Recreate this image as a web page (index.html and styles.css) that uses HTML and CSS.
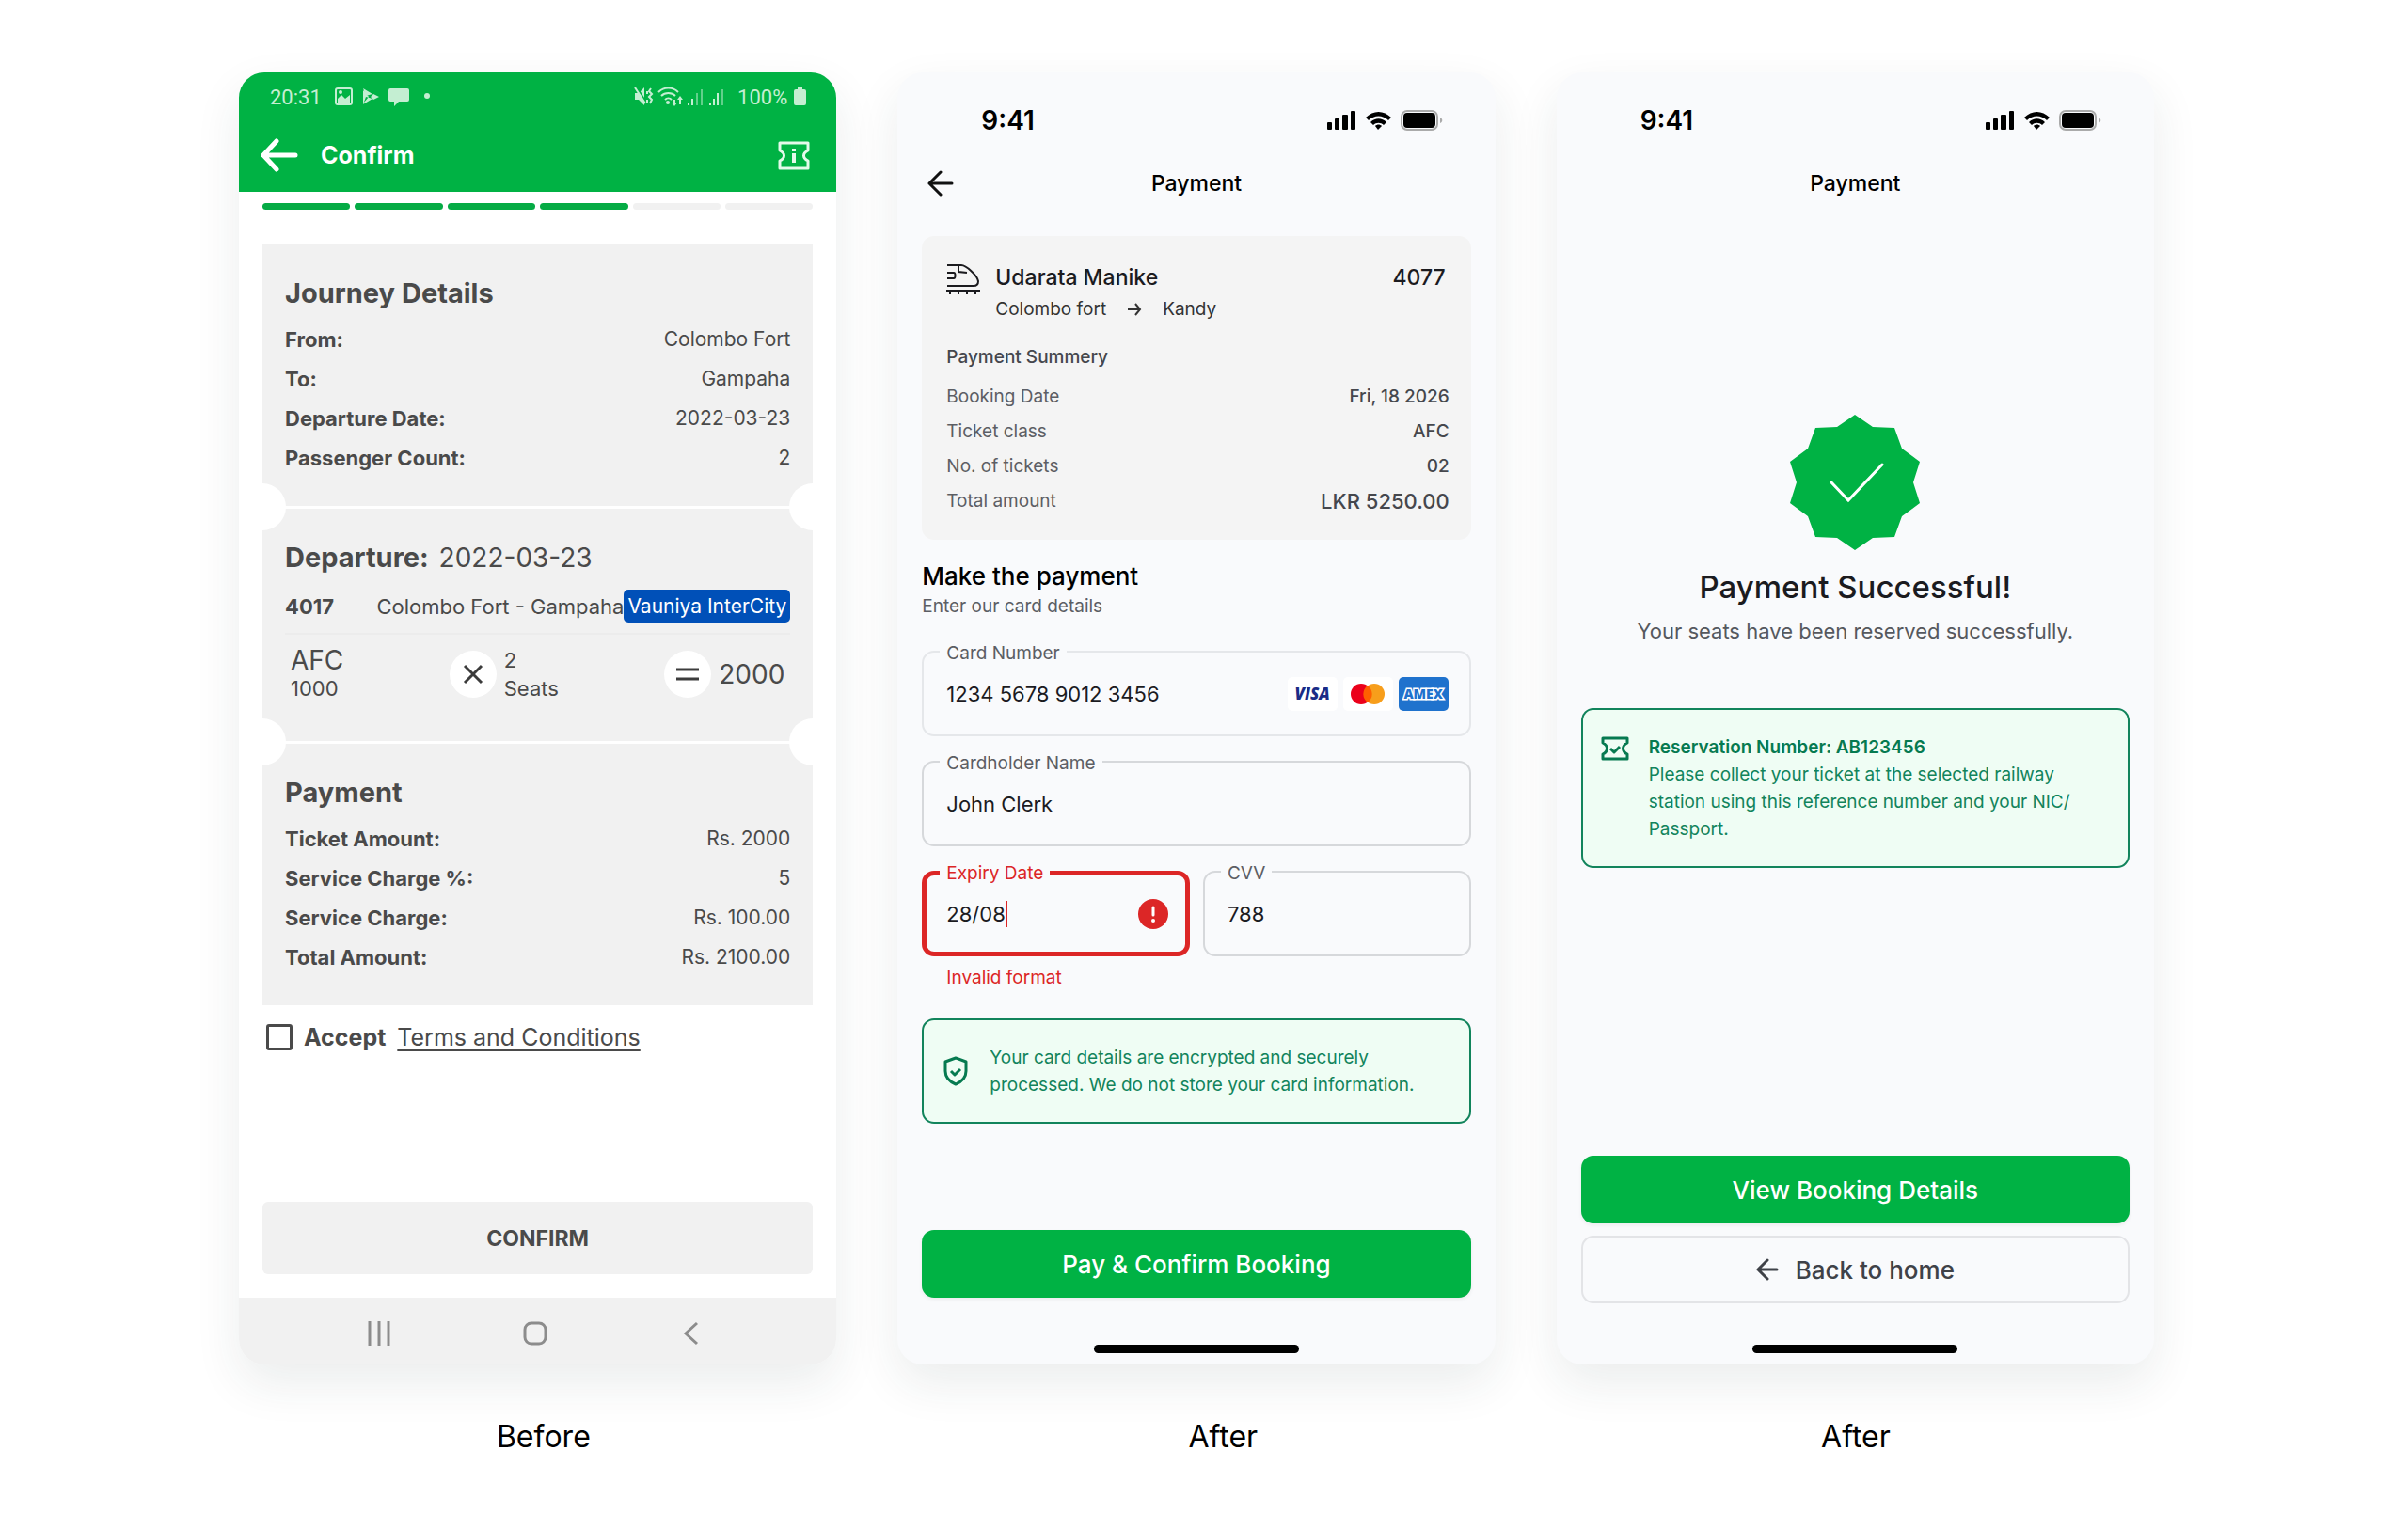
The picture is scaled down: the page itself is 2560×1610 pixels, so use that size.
FILE: index.html
```html
<!DOCTYPE html>
<html lang="en">
<head>
  <meta charset="UTF-8">
  <meta name="viewport" content="width=device-width, initial-scale=1.0">
  <title>Train Booking - Before / After</title>
  <link rel="stylesheet" href="styles.css">
</head>
<body>
  <main class="phones">

    <!-- Before -->
    <section class="phone phone-old">
      <header class="old-header">
        <div class="old-status">
          <span>20:31</span>
          <svg class="old-icons-left" width="102" height="24" viewBox="0 0 102 24">
            <rect class="line" x="1" y="3" width="17" height="17" rx="2"/>
            <path d="M3 18v-4l4-4 4 4 5-4v8z"/><circle cx="6" cy="7" r="2"/>
            <path d="M30 3l10 6-7 2zM30 20l10-6-7-2zM41 9l6 3-6 3-3-3zM30 5l6 7-6 7z"/>
            <path d="M59 3h18a2 2 0 0 1 2 2v10a2 2 0 0 1-2 2h-9l-5 5v-5h-4a2 2 0 0 1-2-2V5a2 2 0 0 1 2-2z"/>
            <circle cx="98" cy="11" r="3"/>
          </svg>
          <svg class="old-icons-right" width="98" height="24" viewBox="0 0 98 24">
            <path d="M1 8h4l6-6v19l-6-6H1z"/>
            <path class="cut" d="M3 2l10 16"/>
            <path class="line" d="M1 2l11 17M14 6v3M14 15v4M18 3l-2 3 3 3-3 3 3 3-2 4"/>
            <path class="line" d="M26 7c6-6 15-6 21 0M29 11c4-4 11-4 15 0M33 15c2-2 5-2 7 0M43 20v-5M49 13v7"/>
            <circle cx="36" cy="18" r="2"/>
            <path d="M40 18l3 4 3-4zM46 15l3-4 3 4z"/>
            <path d="M57 18h2v3h-2zM61 14h2v7h-2zM80 18h2v3h-2zM84 14h2v7h-2zM88 8h2v13h-2z"/>
            <path class="dim" d="M66 8h2v13h-2zM71 4h2v17h-2zM93 4h2v17h-2z"/>
          </svg>
          <span>100%</span>
          <svg width="13" height="20" viewBox="0 0 13 20"><path d="M4 0h5v2h2a2 2 0 0 1 2 2v13a2 2 0 0 1-2 2H2a2 2 0 0 1-2-2V4a2 2 0 0 1 2-2h2z"/></svg>
        </div>
        <div class="old-bar">
          <button class="icon-btn" aria-label="Back">
            <svg width="40" height="36" viewBox="0 0 40 36"><path d="M37 18H3M17 3L3 18l14 15" fill="none" stroke="#fff" stroke-width="5" stroke-linecap="round" stroke-linejoin="round"/></svg>
          </button>
          <h1>Confirm</h1>
          <button class="icon-btn" aria-label="Ticket info">
            <svg width="34" height="31" viewBox="0 0 34 31"><path d="M2 2h30v8c-6 3-6 8 0 11v8H2v-8c6-3 6-8 0-11z" fill="none" stroke="#e3faea" stroke-width="3" stroke-linejoin="round"/><path d="M15 8h4v3h-4zM15 13h4v10h-4z" fill="#e3faea"/></svg>
          </button>
        </div>
      </header>

      <div class="steps">
        <span class="done"></span><span class="done"></span><span class="done"></span><span class="done"></span><span></span><span></span>
      </div>

      <div class="ticket">
        <div class="ticket-part">
          <h2>Journey Details</h2>
          <dl>
            <div><dt>From:</dt><dd>Colombo Fort</dd></div>
            <div><dt>To:</dt><dd>Gampaha</dd></div>
            <div><dt>Departure Date:</dt><dd>2022-03-23</dd></div>
            <div><dt>Passenger Count:</dt><dd>2</dd></div>
          </dl>
        </div>
        <div class="ticket-part">
          <h2>Departure: <span>2022-03-23</span></h2>
          <div class="train">
            <strong>4017</strong>
            <span class="train-route">Colombo Fort - Gampaha</span>
            <span class="train-name">Vauniya InterCity</span>
          </div>
          <div class="sum">
            <div class="sum-class"><span class="big">AFC</span><span>1000</span></div>
            <div class="sum-seats">
              <svg class="round" width="50" height="50" viewBox="0 0 50 50"><path d="M16 16l18 18M34 16L16 34"/></svg>
              <div><span>2</span><span>Seats</span></div>
            </div>
            <div class="sum-total">
              <svg class="round" width="50" height="50" viewBox="0 0 50 50"><path d="M13 20h24M13 30h24"/></svg>
              <span class="big">2000</span>
            </div>
          </div>
        </div>
        <div class="ticket-part">
          <h2>Payment</h2>
          <dl>
            <div><dt>Ticket Amount:</dt><dd>Rs. 2000</dd></div>
            <div><dt>Service Charge %:</dt><dd>5</dd></div>
            <div><dt>Service Charge:</dt><dd>Rs. 100.00</dd></div>
            <div><dt>Total Amount:</dt><dd>Rs. 2100.00</dd></div>
          </dl>
        </div>
      </div>

      <div class="accept">
        <input type="checkbox" id="accept">
        <label for="accept">Accept</label>
        <a href="#">Terms and Conditions</a>
      </div>

      <button class="old-confirm">CONFIRM</button>

      <nav class="android-nav">
        <button class="icon-btn" aria-label="Recent apps"><svg width="26" height="26" viewBox="0 0 26 26"><path d="M3 0v26M13 0v26M23 0v26"/></svg></button>
        <button class="icon-btn" aria-label="Home"><svg width="26" height="26" viewBox="0 0 26 26"><rect x="2" y="2" width="22" height="22" rx="7"/></svg></button>
        <button class="icon-btn" aria-label="Back"><svg width="26" height="26" viewBox="0 0 26 26"><path d="M19 2L7 13l12 11"/></svg></button>
      </nav>
    </section>

    <!-- After: card details -->
    <section class="phone phone-new">
      <div class="ios-status">
        <span>9:41</span>
        <svg width="124" height="24" viewBox="0 0 124 24">
          <rect x="1" y="14" width="5" height="8" rx="1"/><rect x="9" y="10" width="5" height="12" rx="1"/><rect x="17" y="6" width="6" height="16" rx="1"/><rect x="26" y="2" width="5" height="20" rx="1"/>
          <path d="M42 9c8-8 19-8 27 0l-3 3c-6-6-15-6-21 0zM47 14c5-5 12-5 17 0l-3 3c-3-3-8-3-11 0zM52 18c2-2 5-2 7 0l-4 4z"/>
          <rect x="80" y="2" width="38" height="20" rx="6" fill="none" stroke="#aaa" stroke-width="2"/>
          <rect x="82" y="4" width="34" height="16" rx="4"/>
          <path d="M121 9c3 1 3 5 0 6z" fill="#aaa"/>
        </svg>
      </div>
      <header class="title-bar">
        <button class="icon-btn" aria-label="Back">
          <svg width="28" height="28" viewBox="0 0 28 28"><path d="M26 14H2M14 2L2 14l12 12" fill="none" stroke="#111" stroke-width="3" stroke-linecap="round" stroke-linejoin="round"/></svg>
        </button>
        <h1>Payment</h1>
      </header>

      <div class="summary">
        <svg class="train-icon" width="36" height="34" viewBox="0 0 36 34" fill="none" stroke="#1b1b1f" stroke-width="2">
          <path d="M1 2h15c5 0 17 11 18 17 0 3-2 5-5 5H1M13 2v7l9 1M16 2M1 10h7c2 0 2 6 0 6H1M0 29h36M4 29v4M13 29v4M22 29v4M31 29v4"/>
        </svg>
        <div class="summary-head">
          <div class="summary-name"><h2>Udarata Manike</h2><span>4077</span></div>
          <p class="route">
            <span>Colombo fort</span>
            <svg width="16" height="16" viewBox="0 0 16 16"><path d="M1 8h13M9 2l5 6-5 6" fill="none" stroke="#333" stroke-width="2"/></svg>
            <span>Kandy</span>
          </p>
        </div>
        <h3>Payment Summery</h3>
        <dl>
          <div><dt>Booking Date</dt><dd>Fri, 18 2026</dd></div>
          <div><dt>Ticket class</dt><dd>AFC</dd></div>
          <div><dt>No. of tickets</dt><dd>02</dd></div>
          <div><dt>Total amount</dt><dd class="total">LKR 5250.00</dd></div>
        </dl>
      </div>

      <h2 class="form-title">Make the payment</h2>
      <p class="form-sub">Enter our card details</p>

      <form class="card-form">
        <div class="field field-light">
          <label for="number">Card Number</label>
          <input type="text" id="number" value="1234 5678 9012 3456">
          <div class="brands">
            <span class="visa">VISA</span>
            <span class="mastercard">
              <svg width="38" height="24" viewBox="0 0 38 24"><circle cx="12" cy="12" r="11" fill="#eb001b"/><circle cx="26" cy="12" r="11" fill="#f79e1b"/><path d="M19 3a11 11 0 0 1 0 18 11 11 0 0 1 0-18z" fill="#ff5f00"/></svg>
            </span>
            <span class="amex">AMEX</span>
          </div>
        </div>
        <div class="field">
          <label for="holder">Cardholder Name</label>
          <input type="text" id="holder" value="John Clerk">
        </div>
        <div class="field-row">
          <div class="field field-error">
            <label for="expiry">Expiry Date</label>
            <input type="text" id="expiry" value="28/08" aria-describedby="expiry-error">
            <span class="caret"></span>
            <svg class="alert" width="34" height="34" viewBox="0 0 34 34"><circle cx="17" cy="17" r="16" fill="#dc2626"/><path d="M17 10v8" stroke="#fff" stroke-width="3" stroke-linecap="round"/><circle cx="17" cy="24" r="2" fill="#fff"/></svg>
          </div>
          <div class="field">
            <label for="cvv">CVV</label>
            <input type="text" id="cvv" value="788">
          </div>
        </div>
      </form>
      <p class="error-text" id="expiry-error">Invalid format</p>

      <div class="note note-secure">
        <svg width="32" height="32" viewBox="0 0 32 32"><path d="M16 2l11 4v10c0 7-4 11-11 14C9 27 5 23 5 16V6zM11 16l4 4 6-6"/></svg>
        <p>Your card details are encrypted and securely processed. We do not store your card information.</p>
      </div>

      <div class="actions">
        <button class="btn btn-green">Pay &amp; Confirm Booking</button>
      </div>
      <div class="home-bar"></div>
    </section>

    <!-- After: success -->
    <section class="phone phone-new">
      <div class="ios-status">
        <span>9:41</span>
        <svg width="124" height="24" viewBox="0 0 124 24">
          <rect x="1" y="14" width="5" height="8" rx="1"/><rect x="9" y="10" width="5" height="12" rx="1"/><rect x="17" y="6" width="6" height="16" rx="1"/><rect x="26" y="2" width="5" height="20" rx="1"/>
          <path d="M42 9c8-8 19-8 27 0l-3 3c-6-6-15-6-21 0zM47 14c5-5 12-5 17 0l-3 3c-3-3-8-3-11 0zM52 18c2-2 5-2 7 0l-4 4z"/>
          <rect x="80" y="2" width="38" height="20" rx="6" fill="none" stroke="#aaa" stroke-width="2"/>
          <rect x="82" y="4" width="34" height="16" rx="4"/>
          <path d="M121 9c3 1 3 5 0 6z" fill="#aaa"/>
        </svg>
      </div>
      <header class="title-bar"><h1>Payment</h1></header>

      <div class="success">
        <svg width="144" height="144" viewBox="-72 -72 144 144">
          <polygon fill="#00b244" points="0,-72 19,-59 42,-58 50,-36 69,-22 62,0 69,22 50,36 42,58 19,59 0,72 -19,59 -42,58 -50,36 -69,22 -62,0 -69,-22 -50,-36 -42,-58 -19,-59"/>
          <path d="M-25 0L-7 19 29-19" fill="none" stroke="#fff" stroke-width="3" stroke-linecap="round"/>
        </svg>
        <h2>Payment Successful!</h2>
        <p>Your seats have been reserved successfully.</p>
      </div>

      <div class="note note-ticket">
        <svg width="32" height="32" viewBox="0 0 32 32"><path d="M3 5h26v5c-6 3-6 9 0 12v5H3v-5c6-3 6-9 0-12zM11 16l4 4 6-6"/></svg>
        <p><strong>Reservation Number: AB123456</strong><br>Please collect your ticket at the selected railway station using this reference number and your NIC/<wbr>Passport.</p>
      </div>

      <div class="actions actions-double">
        <button class="btn btn-green">View Booking Details</button>
        <button class="btn btn-plain">
          <svg width="24" height="24" viewBox="0 0 24 24"><path d="M22 12H2M12 2L2 12l10 10" fill="none" stroke="#3f4248" stroke-width="3" stroke-linecap="round" stroke-linejoin="round"/></svg>
          Back to home
        </button>
      </div>
      <div class="home-bar"></div>
    </section>
  </main>

  <footer class="captions">
    <p>Before</p>
    <p>After</p>
    <p>After</p>
  </footer>
</body>
</html>
```

FILE: styles.css
```css
* {
  box-sizing: border-box;
}
body, h1, h2, h3, p, dl, dd {
  margin: 0;
}
body {
  background: #fff;
  color: #000;
  font-family: Inter, "Liberation Sans", sans-serif;
  font-size: 19px;
}
button, input {
  font-family: inherit;
}
svg {
  display: block;
  flex: none;
}
.icon-btn {
  padding: 0;
  border: none;
  background: none;
  cursor: pointer;
}
dl div {
  display: flex;
  justify-content: space-between;
}

.phones {
  display: grid;
  grid-template-columns: repeat(3, 1fr);
  gap: 65px;
  padding: 77px 270px 0 254px;
}
.phone {
  display: flex;
  flex-direction: column;
  border-radius: 27px;
  overflow: hidden;
  box-shadow: 0 20px 50px rgba(30, 50, 60, 0.09);
}

/* Before */
.phone-old {
  background: #fff;
  color: #4a4a4a;
  font-size: 22px;
}
.old-header {
  padding: 6px 28px 9px 23px;
  background: #00b244;
  color: #fff;
}
.old-status {
  display: flex;
  align-items: center;
  height: 40px;
  padding-left: 10px;
  color: #c4eed2;
  fill: #c4eed2;
  font-family: Roboto, sans-serif;
}
.old-icons-left {
  margin-left: 14px;
}
.old-icons-right {
  margin: 0 12px 0 auto;
}
.old-status svg:last-child {
  margin: 0 4px 0 7px;
}
.line {
  fill: none;
  stroke: #c4eed2;
  stroke-width: 2;
}
.cut {
  stroke: #00b244;
  stroke-width: 2;
}
.dim {
  opacity: 0.5;
}
.old-bar {
  display: flex;
  align-items: center;
  gap: 24px;
  height: 60px;
  margin-top: 12px;
}
.old-bar h1 {
  flex: 1;
  font-size: 25px;
  font-weight: 700;
}
.steps {
  display: grid;
  grid-template-columns: repeat(6, 1fr);
  gap: 5px;
  padding: 12px 25px 37px;
}
.steps span {
  height: 7px;
  border-radius: 4px;
  background: #f1f1f1;
}
.steps .done {
  background: #05ab45;
}
.ticket {
  margin: 0 25px;
}
.ticket-part {
  position: relative;
  padding: 32px 24px 30px;
  background: #f1f1f1;
}
.ticket-part + .ticket-part {
  border-top: 3px solid #fff;
}
.ticket-part + .ticket-part::before,
.ticket-part + .ticket-part::after {
  content: "";
  position: absolute;
  top: -27px;
  width: 50px;
  height: 50px;
  border-radius: 50%;
  background: #fff;
}
.ticket-part + .ticket-part::before {
  left: -25px;
}
.ticket-part + .ticket-part::after {
  right: -25px;
}
.ticket h2 {
  margin-bottom: 8px;
  font-size: 29px;
  line-height: 40px;
  font-weight: 700;
}
.ticket h2 span {
  margin-left: 4px;
  font-size: 28px;
  font-weight: 400;
}
.ticket dl div {
  line-height: 42px;
}
.ticket dt {
  font-weight: 700;
}
.ticket dd {
  font-size: 21px;
}
.train {
  display: flex;
  align-items: center;
  margin-top: 14px;
  padding-bottom: 11px;
  border-bottom: 2px solid #ececec;
  white-space: nowrap;
}
.train-route {
  margin-left: auto;
}
.train-name {
  padding: 0 4px;
  border-radius: 5px;
  background: #0050b8;
  color: #fff;
  font-size: 21px;
  line-height: 35px;
}
.sum {
  display: flex;
  align-items: center;
  justify-content: space-between;
  height: 83px;
  padding: 0 6px;
}
.sum .big {
  font-size: 28px;
}
.sum-class, .sum-seats div {
  display: flex;
  flex-direction: column;
  line-height: 30px;
}
.sum-seats, .sum-total {
  display: flex;
  align-items: center;
  gap: 8px;
}
.round {
  border-radius: 50%;
  background: #fff;
  stroke: #3c3c3c;
  stroke-width: 3;
}
.accept {
  display: flex;
  align-items: center;
  gap: 12px;
  height: 36px;
  margin: 16px 29px 0;
  font-size: 25px;
}
.accept input {
  appearance: none;
  width: 28px;
  height: 28px;
  margin: 0;
  border: 3px solid #4a4a4a;
  border-radius: 3px;
}
.accept label {
  font-weight: 700;
}
.accept a {
  color: #4a4a4a;
  text-underline-offset: 4px;
}
.old-confirm {
  height: 77px;
  margin: auto 25px 25px;
  border: none;
  border-radius: 6px;
  background: #f1f1f1;
  color: #4a4a4a;
  font-size: 23px;
  font-weight: 700;
}
.android-nav {
  display: flex;
  align-items: center;
  justify-content: space-between;
  height: 71px;
  padding: 4px 141px 0 136px;
  background: #f1f1f1;
}
.android-nav svg {
  fill: none;
  stroke: #8c8c8c;
  stroke-width: 3;
}

/* After */
.phone-new {
  padding: 0 26px 12px;
  background: #f9fafc;
}
.ios-status {
  display: flex;
  align-items: center;
  justify-content: space-between;
  height: 38px;
  margin-top: 32px;
  padding: 0 30px 0 63px;
  font-size: 28px;
  font-weight: 600;
}
.title-bar {
  display: grid;
  grid-template-columns: 1fr auto 1fr;
  align-items: center;
  height: 48px;
  margin: 24px 0 32px;
  padding: 0 6px;
}
.title-bar h1 {
  grid-column: 2;
  font-size: 23px;
  font-weight: 500;
}
.title-bar button {
  justify-self: start;
}
.summary {
  display: grid;
  grid-template-columns: auto 1fr;
  column-gap: 16px;
  padding: 29px 23px 26px 26px;
  border-radius: 13px;
  background: #f4f4f4;
  color: #45474d;
  line-height: 30px;
}
.summary h3, .summary dl {
  grid-column: span 2;
}
.summary-name {
  display: flex;
  justify-content: space-between;
  padding-right: 4px;
  color: #1b1b1f;
  font-size: 23px;
  font-weight: 500;
}
.summary h2 {
  font-size: 23px;
  font-weight: 500;
}
.route {
  display: flex;
  align-items: center;
  gap: 22px;
  margin-top: 4px;
  color: #333;
}
.summary h3 {
  margin: 21px 0 12px;
  font-size: 19px;
  font-weight: 500;
}
.summary dl {
  display: grid;
  gap: 7px;
}
.summary dt {
  color: #5c5e64;
}
.summary dd {
  font-weight: 500;
}
.summary .total {
  font-size: 22px;
}
.form-title {
  margin-top: 21px;
  font-size: 26px;
  line-height: 36px;
  font-weight: 500;
}
.form-sub {
  margin-bottom: 33px;
  color: #5c5e64;
  line-height: 28px;
}
.card-form {
  display: grid;
  gap: 26px;
}
.field-row {
  display: grid;
  grid-template-columns: repeat(2, minmax(0, 1fr));
  gap: 14px;
}
.field {
  position: relative;
  display: flex;
  align-items: center;
  height: 91px;
  padding: 0 22px 0 24px;
  border: 2px solid #d6d8db;
  border-radius: 13px;
}
.field-light {
  border-color: #e5e7ea;
}
.field label {
  position: absolute;
  top: -13px;
  left: 17px;
  padding: 0 7px;
  background: #f9fafc;
  color: #5c5e64;
  line-height: 28px;
}
.field input {
  flex: 1;
  min-width: 0;
  padding: 0;
  border: none;
  outline: none;
  background: none;
  color: #1b1b1f;
  font-size: 22px;
}
.field-error {
  padding: 0 17px 0 21px;
  border: 5px solid #dc2626;
}
.field-error label {
  top: -16px;
  left: 14px;
  color: #dc2626;
}
.field-error input {
  flex: none;
  field-sizing: content;
}
.caret {
  width: 2px;
  height: 28px;
  background: #dc2626;
}
.alert {
  margin-left: auto;
}
.brands {
  display: flex;
  gap: 6px;
}
.brands span {
  display: flex;
  align-items: center;
  justify-content: center;
  width: 53px;
  height: 36px;
  border-radius: 5px;
  background: #fff;
  font-family: "Open Sans", sans-serif;
  font-size: 17px;
  font-weight: 800;
}
.brands .visa {
  color: #1a2b86;
  font-style: italic;
}
.brands .amex {
  background: #1f72cd;
  color: #1f72cd;
  font-size: 14px;
  -webkit-text-stroke: 3px #fff;
  paint-order: stroke fill;
}
.error-text {
  margin: 9px 26px 29px;
  color: #dc2626;
  line-height: 28px;
}
.note {
  display: flex;
  gap: 20px;
  padding: 25px 18px;
  border: 2px solid #12845c;
  border-radius: 13px;
  background: #effdf4;
  color: #12845c;
  line-height: 29px;
}
.note svg {
  fill: none;
  stroke: #067a50;
  stroke-width: 3;
  stroke-linejoin: round;
}
.note-secure {
  align-items: center;
  margin-bottom: 113px;
}
.note strong {
  color: #067a50;
  font-weight: 600;
}
.actions {
  display: grid;
  gap: 13px;
  margin: auto 0 50px;
}
.actions-double {
  margin-bottom: 44px;
}
.btn {
  display: flex;
  align-items: center;
  justify-content: center;
  gap: 18px;
  height: 72px;
  border: none;
  border-radius: 13px;
  font-size: 26px;
  font-weight: 500;
  cursor: pointer;
}
.btn-green {
  background: #00b244;
  color: #fff;
  box-shadow: 0 2px 4px rgba(0, 0, 0, 0.06);
}
.btn-plain {
  border: 2px solid #e3e4e7;
  background: none;
  color: #3f4248;
}
.home-bar {
  width: 218px;
  height: 9px;
  margin: 0 auto;
  border-radius: 5px;
  background: #000;
}
.success {
  display: flex;
  flex-direction: column;
  align-items: center;
  margin: 190px 0 67px;
}
.success h2 {
  margin: 17px 0 10px;
  color: #1b1b1f;
  font-size: 33px;
  line-height: 44px;
  font-weight: 500;
}
.success p {
  color: #55585e;
  font-size: 22px;
  line-height: 30px;
}

.captions {
  display: grid;
  grid-template-columns: 13fr 16fr 11fr;
  padding: 55px 313px 59px 254px;
  font-size: 32px;
  line-height: 44px;
  text-align: center;
}
```
